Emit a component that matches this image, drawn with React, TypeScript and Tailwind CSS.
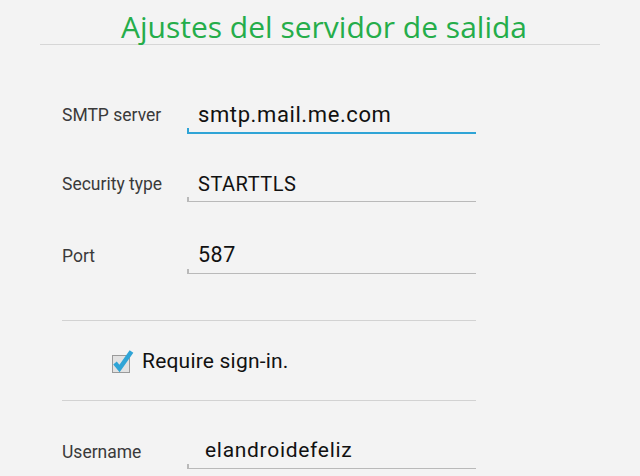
const BLUE = "#2fa4d6";

function Field({
  label,
  value,
  focused,
  rowClass,
  valueClass,
  labelClass,
}: {
  label: string;
  value: string;
  focused?: boolean;
  rowClass: string;
  valueClass: string;
  labelClass: string;
}) {
  return (
    <div className={`flex items-end ${rowClass}`}>
      <div
        className={`w-[125px] text-[17.5px] leading-[20px] text-[#3a3a3a] ${labelClass}`}
      >
        {label}
      </div>
      <div
        className={`flex w-[289px] items-end ${
          focused ? "border-b-2 border-[#2fa4d6]" : "border-b border-[#b9b9b9]"
        }`}
      >
        <div
          className={`h-[4px] w-[2px] ${focused ? "bg-[#2fa4d6]" : "bg-[#b9b9b9]"}`}
        />
        <div className={`text-[#111] ${valueClass}`}>{value}</div>
      </div>
    </div>
  );
}

function CheckIcon() {
  return (
    <svg width="28" height="28" viewBox="0 0 28 28">
      <rect
        x="2.5"
        y="8.5"
        width="17"
        height="17"
        fill="#e2e2e2"
        stroke="#9a9a9a"
        strokeWidth="1"
      />
      <path
        d="M5 16 L9.5 21.5 L21.5 4.5"
        fill="none"
        stroke={BLUE}
        strokeWidth="4.5"
      />
    </svg>
  );
}

export default function App() {
  return (
    <div className="h-[476px] w-[640px] overflow-hidden bg-[#f3f3f3] font-['Roboto',sans-serif]">
      <div className="mx-[40px] flex h-[45px] items-end justify-center border-b border-[#d6d6d6] pb-[1px] pl-[8px]">
        <h1 className="font-['Open_Sans',sans-serif] text-[30px] leading-[32px] text-[#25ad4a]">
          Ajustes del servidor de salida
        </h1>
      </div>
      <div className="w-[476px] pl-[62px]">
        <Field
          label="SMTP server"
          value="smtp.mail.me.com"
          focused
          rowClass="h-[89px]"
          labelClass="mb-[9px]"
          valueClass="pl-[9px] pb-[5px] text-[22px] leading-[24px] tracking-[0.6px]"
        />
        <Field
          label="Security type"
          value="STARTTLS"
          rowClass="h-[68px]"
          labelClass="mb-[8px]"
          valueClass="pl-[9px] pb-[6px] text-[20px] leading-[22px] tracking-[0.5px]"
        />
        <Field
          label="Port"
          value="587"
          rowClass="h-[72px]"
          labelClass="mb-[8px]"
          valueClass="pl-[9px] pb-[6px] text-[21.5px] leading-[24px] tracking-[0.5px]"
        />
        <div className="mt-[46px] h-px bg-[#d2d2d2]" />
        <div className="flex h-[79px] items-center pl-[48px]">
          <CheckIcon />
          <span className="ml-[4px] text-[21px] leading-[24px] tracking-[0.2px] text-[#111]">
            Require sign-in.
          </span>
        </div>
        <div className="h-px bg-[#d2d2d2]" />
        <Field
          label="Username"
          value="elandroidefeliz"
          rowClass="h-[68px]"
          labelClass="mb-[7px]"
          valueClass="pl-[16px] pb-[6px] text-[21px] leading-[24px] tracking-[0.7px]"
        />
      </div>
    </div>
  );
}
